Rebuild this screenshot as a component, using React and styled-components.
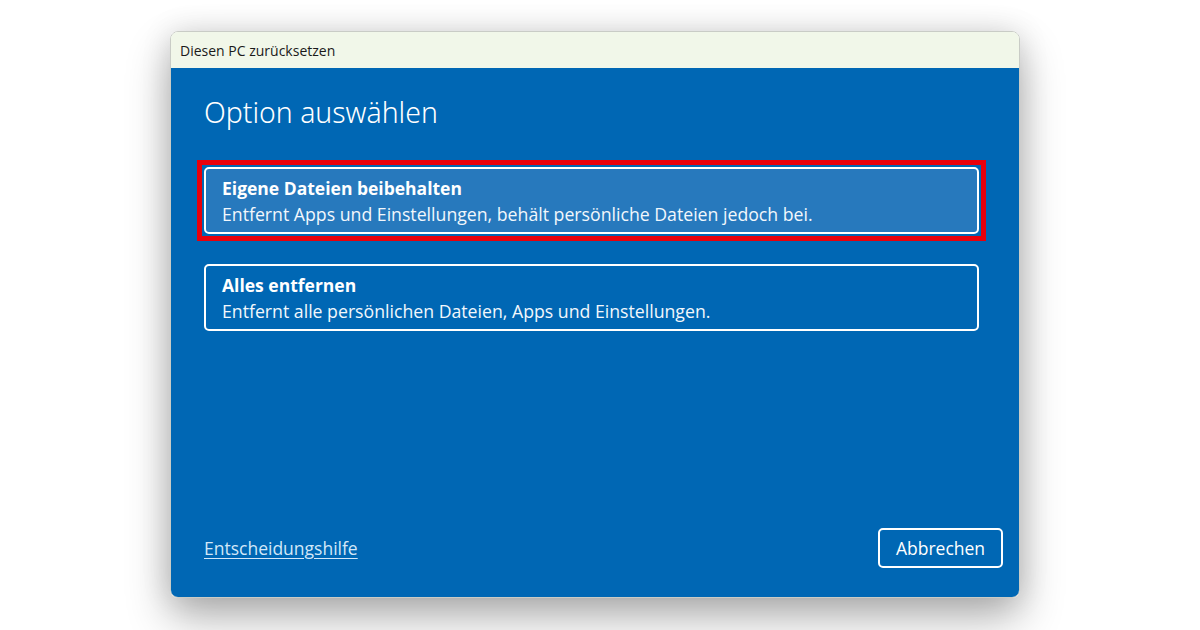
import React from "react";
import styled, { createGlobalStyle } from "styled-components";

// Windows "Diesen PC zurücksetzen" dialog

const GlobalStyle = createGlobalStyle`
  html, body {
    margin: 0;
    padding: 0;
    background: #ffffff;
    font-family: "Open Sans", "Noto Sans", sans-serif;
  }
`;

const Page = styled.div`
  width: 1200px;
  height: 630px;
  padding-top: 31px;
  padding-left: 170px;
  box-sizing: border-box;
  overflow: hidden;
`;

const Dialog = styled.div`
  width: 850px;
  height: 567px;
  border-radius: 8px;
  overflow: hidden;
  display: flex;
  flex-direction: column;
  border: 1px solid #c9ccc6;
  box-sizing: border-box;
  box-shadow: 0 20px 44px rgba(0, 0, 0, 0.3), 0 0 30px rgba(0, 0, 0, 0.12);
`;

const TitleBar = styled.div`
  height: 36px;
  background: #f1f7e9;
  display: flex;
  align-items: center;
  padding-left: 9px;
  font-size: 14px;
  color: #1a1a1a;
  flex-shrink: 0;
`;

const Body = styled.div`
  flex: 1;
  background: #0067b4;
  display: flex;
  flex-direction: column;
  padding: 25px 16px 29px 33px;
`;

const Heading = styled.h1`
  margin: 0 0 29px 0;
  font-family: "Noto Sans", "Open Sans", sans-serif;
  font-weight: 300;
  font-size: 28.4px;
  line-height: 38px;
  color: #ffffff;
`;

const Options = styled.div`
  display: flex;
  flex-direction: column;
  gap: 16px;
  width: 789px;
  margin-left: -7px;
`;

const Highlight = styled.div`
  border: 5px solid ${(p) => (p.$on ? "#e8000b" : "transparent")};
  padding: 2px;
`;

const Option = styled.div`
  height: 67px;
  box-sizing: border-box;
  border: 2px solid #ffffff;
  border-radius: 5px;
  background: ${(p) => (p.$selected ? "#2779bd" : "transparent")};
  padding: 6px 16px 0 16px;
  color: #ffffff;
`;

const OptionTitle = styled.div`
  font-weight: 700;
  font-size: 17.5px;
  line-height: 26px;
`;

const OptionText = styled.div`
  font-size: 17.7px;
  line-height: 26px;
  color: #f2f7fc;
`;

const Footer = styled.div`
  margin-top: auto;
  display: flex;
  align-items: center;
  justify-content: space-between;
`;

const HelpLink = styled.a`
  color: #d3e7f8;
  font-size: 17.5px;
  text-decoration: underline;
  text-underline-offset: 3px;
`;

const CancelButton = styled.button`
  width: 125px;
  height: 40px;
  border: 2px solid #ffffff;
  border-radius: 5px;
  background: transparent;
  color: #ffffff;
  font-family: "Open Sans", "Noto Sans", sans-serif;
  font-size: 17.5px;
  padding: 0;
`;

const App = () => {
  return (
    <Page>
      <GlobalStyle />
      <Dialog>
        <TitleBar>Diesen PC zurücksetzen</TitleBar>
        <Body>
          <Heading>Option auswählen</Heading>
          <Options>
            <Highlight $on>
              <Option $selected>
                <OptionTitle>Eigene Dateien beibehalten</OptionTitle>
                <OptionText>
                  Entfernt Apps und Einstellungen, behält persönliche Dateien jedoch bei.
                </OptionText>
              </Option>
            </Highlight>
            <Highlight>
              <Option>
                <OptionTitle>Alles entfernen</OptionTitle>
                <OptionText>
                  Entfernt alle persönlichen Dateien, Apps und Einstellungen.
                </OptionText>
              </Option>
            </Highlight>
          </Options>
          <Footer>
            <HelpLink href="#">Entscheidungshilfe</HelpLink>
            <CancelButton>Abbrechen</CancelButton>
          </Footer>
        </Body>
      </Dialog>
    </Page>
  );
};

export default App;
